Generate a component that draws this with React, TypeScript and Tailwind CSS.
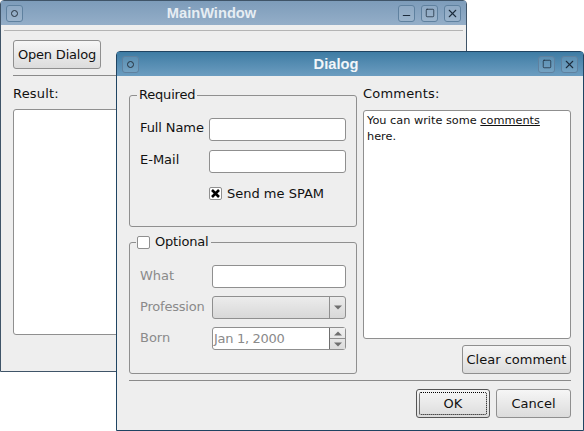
import { X, Minus, Square } from 'lucide-react'
import type { ReactNode } from 'react'

const btn =
  'flex items-center justify-center rounded-[3px] border border-[#8f8f8f] bg-gradient-to-b from-[#f6f6f6] to-[#dcdcdc] text-[13px] text-[#111]'
const field = 'h-[23px] rounded-[3px] border border-[#8f8f8f] bg-white'

function TitleBtn({ children }: { children: ReactNode }) {
  return (
    <div className="flex h-[17px] w-[17px] items-center justify-center rounded-[3px] border border-[#5f819f] bg-white/10 text-[#1c2c3c]">
      {children}
    </div>
  )
}

function MenuBtn() {
  return (
    <TitleBtn>
      <div className="h-[7px] w-[7px] rounded-full border border-[#26323e]" />
    </TitleBtn>
  )
}

function TitleBar({
  title,
  className,
  textClass,
  children,
}: {
  title: string
  className: string
  textClass: string
  children: ReactNode
}) {
  return (
    <div className={`flex h-[24px] shrink-0 items-center pl-[5px] pr-[5px] ${className}`}>
      <MenuBtn />
      <div className={`flex-1 text-center font-['Liberation_Sans',sans-serif] text-[14.67px] font-bold ${textClass}`}>
        {title}
      </div>
      <div className="flex gap-[6px]">{children}</div>
    </div>
  )
}

function Row({
  label,
  labelClass,
  children,
}: {
  label: string
  labelClass: string
  children: ReactNode
}) {
  return (
    <div className="flex items-center">
      <div className={`text-[13px] ${labelClass}`}>{label}</div>
      {children}
    </div>
  )
}

function Arrow({ up, className }: { up?: boolean; className?: string }) {
  return (
    <svg width="8" height="5" viewBox="0 0 8 5" className={className}>
      <path d={up ? 'M4 0.5 L8 4.5 H0 Z' : 'M0 0.5 H8 L4 4.5 Z'} fill="#6f6f6f" />
    </svg>
  )
}

function MainWindow() {
  return (
    <div className="absolute left-0 top-0 flex h-[372px] w-[467px] flex-col rounded-t-[4px] border border-[#3f5468] bg-[#eeeeee]">
      <TitleBar
        title="MainWindow"
        className="bg-gradient-to-b from-[#7d9cba] to-[#94aec8]"
        textClass="text-[#e6edf3] pl-[2px]"
      >
        <TitleBtn>
          <Minus size={11} strokeWidth={2.5} className="mt-[5px]" />
        </TitleBtn>
        <TitleBtn>
          <Square size={10} strokeWidth={1.8} />
        </TitleBtn>
        <TitleBtn>
          <X size={13} strokeWidth={2} />
        </TitleBtn>
      </TitleBar>
      <div className="mx-[3px] mt-[5px] h-px bg-[#b4b4b4]" />
      <div className="flex min-h-0 flex-1 flex-col px-[12px]">
        <button className={`${btn} mt-[9px] h-[29px] w-[88px] tracking-[-0.2px]`}>Open Dialog</button>
        <div className="mt-[6px] h-px bg-[#8a8a8a]" />
        <div className="mt-[8px] h-[17px] text-[13px] tracking-[0.2px] text-[#111]">Result:</div>
        <div className="mt-[8px] h-[226px] rounded-[3px] border border-[#8f8f8f] bg-white" />
      </div>
    </div>
  )
}

function Dialog() {
  return (
    <div className="absolute left-[116px] top-[51px] flex h-[380px] w-[468px] flex-col rounded-t-[4px] border border-[#1f4462] bg-[#eeeeee]">
      <TitleBar
        title="Dialog"
        className="bg-gradient-to-b from-[#3e7ca4] to-[#6c9dc0]"
        textClass="text-[#f2f6f9] pr-[5px]"
      >
        <TitleBtn>
          <Square size={10} strokeWidth={1.8} />
        </TitleBtn>
        <TitleBtn>
          <X size={13} strokeWidth={2} />
        </TitleBtn>
      </TitleBar>

      <div className="flex gap-[6px] pl-[12px] pt-[9px]">
        <div className="flex w-[228px] flex-col gap-[7px] pt-[2px]">
          <fieldset className="h-[140px] rounded-[3px] border border-[#8f8f8f]">
            <legend className="ml-[7px] px-[2px] text-[13px] leading-[16px] tracking-[-0.2px] text-[#111]">
              Required
            </legend>
            <div className="flex flex-col gap-[9px] pl-[10px] pt-[15px]">
              <Row label="Full Name" labelClass="w-[69px] pb-[3px] tracking-[-0.1px] text-[#111]">
                <div className={`${field} w-[137px]`} />
              </Row>
              <Row label="E-Mail" labelClass="w-[69px] pb-[3px] text-[#111]">
                <div className={`${field} w-[137px]`} />
              </Row>
              <div className="ml-[69px] mt-[2px] flex items-center gap-[5px]">
                <div className="flex h-[13px] w-[13px] items-center justify-center rounded-[2px] border border-[#8f8f8f] bg-white">
                  <svg width="9" height="9" viewBox="0 0 9 9">
                    <path d="M1 1 L8 8 M8 1 L1 8" stroke="#000" strokeWidth="2.6" />
                  </svg>
                </div>
                <span className="text-[13px] text-[#111]">Send me SPAM</span>
              </div>
            </div>
          </fieldset>

          <fieldset className="h-[140px] rounded-[3px] border border-[#8f8f8f]">
            <legend className="ml-[6px] flex items-center gap-[5px] pl-px pr-[3px] text-[13px] leading-[16px] tracking-[-0.2px] text-[#111]">
              <span className="h-[13px] w-[13px] rounded-[2px] border border-[#8f8f8f] bg-white" />
              Optional
            </legend>
            <div className="flex flex-col gap-[8px] pl-[10px] pt-[15px]">
              <Row label="What" labelClass="w-[72px] pb-[1px] text-[#8a8a8a]">
                <div className={`${field} w-[134px]`} />
              </Row>
              <Row label="Profession" labelClass="w-[72px] pb-[1px] tracking-[-0.2px] text-[#8a8a8a]">
                <div className="flex h-[23px] w-[134px] rounded-[3px] border border-[#8f8f8f] bg-gradient-to-b from-[#ececec] to-[#d8d8d8]">
                  <div className="flex-1" />
                  <div className="flex w-[16px] items-center justify-center border-l border-[#8f8f8f]">
                    <Arrow />
                  </div>
                </div>
              </Row>
              <Row label="Born" labelClass="w-[72px] pb-[1px] text-[#8a8a8a]">
                <div className="flex h-[23px] w-[134px] rounded-[3px] border border-[#8f8f8f] bg-white">
                  <div className="flex-1 pl-[1px] text-[13px] leading-[21px] tracking-[-0.3px] text-[#8a8a8a]">
                    Jan 1, 2000
                  </div>
                  <div className="flex w-[16px] flex-col border-l border-[#6f6f6f] bg-gradient-to-b from-[#f0f0f0] to-[#dcdcdc]">
                    <div className="flex flex-1 items-center justify-center border-b border-[#8f8f8f]">
                      <Arrow up />
                    </div>
                    <div className="flex flex-1 items-center justify-center">
                      <Arrow />
                    </div>
                  </div>
                </div>
              </Row>
            </div>
          </fieldset>
        </div>

        <div className="flex w-[208px] flex-col">
          <div className="h-[17px] text-[13px] leading-[17px] tracking-[0.2px] text-[#111]">Comments:</div>
          <div className="mt-[8px] h-[229px] rounded-[3px] border border-[#8f8f8f] bg-white px-[3px] pt-[2px] text-[11.3px] leading-[16px] text-[#111]">
            You can write some <span className="underline">comments</span> here.
          </div>
          <button className={`${btn} ml-auto mt-[6px] h-[29px] w-[109px]`}>Clear comment</button>
        </div>
      </div>

      <div className="mx-[12px] mt-[6px] h-px bg-[#8a8a8a]" />
      <div className="mr-[12px] mt-[8px] flex justify-end gap-[6px]">
        <button className={`${btn} relative h-[29px] w-[74px] border-[#555]`}>
          <span className="absolute inset-[2px] rounded-[2px] border border-dotted border-black" />
          OK
        </button>
        <button className={`${btn} h-[29px] w-[75px]`}>Cancel</button>
      </div>
    </div>
  )
}

export default function App() {
  return (
    <div className="relative h-[431px] w-[584px] overflow-hidden bg-white font-['DejaVu_Sans',sans-serif]">
      <MainWindow />
      <Dialog />
    </div>
  )
}
